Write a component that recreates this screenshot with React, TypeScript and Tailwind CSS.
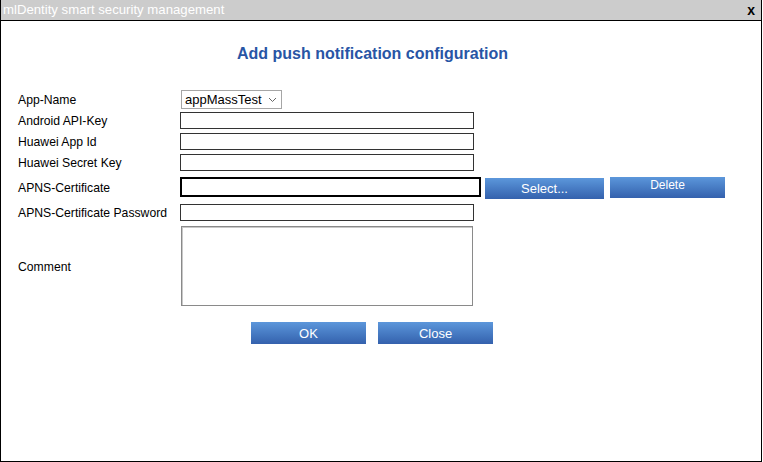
import React from "react";

const font = { fontFamily: '"Liberation Sans", Arial, sans-serif' };

function TextInput({ wide = false }: { wide?: boolean }) {
  return wide ? (
    <div className="h-[20px] w-[301px] border-2 border-black bg-white" />
  ) : (
    <div className="h-[17px] w-[294px] border border-[#333333] bg-white" />
  );
}

function BlueButton({ label, w, size = "text-[13px]", extra = "" }: { label: string; w: string; size?: string; extra?: string }) {
  return (
    <div
      className={`flex h-[21px] items-center justify-center bg-gradient-to-b from-[#5c97db] to-[#3461ad] text-white leading-none ${w} ${size} ${extra}`}
    >
      {label}
    </div>
  );
}

function Row({ label, h, children }: { label: string; h: string; children: React.ReactNode }) {
  return (
    <div className={`flex items-center ${h}`}>
      <div className="w-[162px] shrink-0 pt-[2px] text-[12.2px] leading-none text-black">{label}</div>
      {children}
    </div>
  );
}

export default function App() {
  return (
    <div className="h-[462px] w-[763px] bg-white" style={font}>
      <div className="flex h-[462px] w-[762px] flex-col border-b border-l border-r border-black bg-white">
        <div className="flex h-[21px] shrink-0 items-center justify-between border-b border-black bg-[#cccccc] pl-[2px] pr-[6px]">
          <span className="text-[13.2px] leading-none text-white">mlDentity smart security management</span>
          <span className="text-[14px] font-bold leading-none text-black">x</span>
        </div>
        <div className="flex flex-col pl-[17px] pt-[23px]">
          <div className="flex h-[20px] items-center justify-center pr-[34px] text-[16px] font-bold leading-[20px] text-[#2855a5]">
            Add push notification configuration
          </div>
          <div className="mt-[25px] flex flex-col">
            <Row label="App-Name" h="h-[21px]">
              <div className="ml-[1px] flex h-[19px] w-[101px] items-center justify-between border border-[#a6a6a6] bg-white pl-[3px] pr-[4px]">
                <span className="text-[13px] leading-none text-black">appMassTest</span>
                <svg width="9" height="6" viewBox="0 0 9 6">
                  <path d="M1 1 L4.5 4.5 L8 1" fill="none" stroke="#666" strokeWidth="1" />
                </svg>
              </div>
            </Row>
            <Row label="Android API-Key" h="h-[21px]">
              <TextInput />
            </Row>
            <Row label="Huawei App Id" h="h-[21px]">
              <TextInput />
            </Row>
            <Row label="Huawei Secret Key" h="h-[21px]">
              <TextInput />
            </Row>
            <Row label="APNS-Certificate" h="h-[28px]">
              <TextInput wide />
              <BlueButton label="Select..." w="w-[119px] ml-[4px] mt-[2px]" />
              <BlueButton label="Delete" w="w-[115px] ml-[6px]" size="text-[12px]" extra="pb-[4px]" />
            </Row>
            <Row label="APNS-Certificate Password" h="h-[22px]">
              <TextInput />
            </Row>
            <Row label="Comment" h="h-[86px]">
              <div className="ml-[1px] h-[80px] w-[292px] border border-[#8a8a8a] bg-white shadow-[inset_1px_1px_0_#c8c8c8]" />
            </Row>
          </div>
          <div className="mt-[13px] flex pl-[233px]">
            <BlueButton label="OK" w="w-[115px] h-[22px]" />
            <BlueButton label="Close" w="w-[115px] ml-[12px] h-[22px]" />
          </div>
        </div>
      </div>
    </div>
  );
}
